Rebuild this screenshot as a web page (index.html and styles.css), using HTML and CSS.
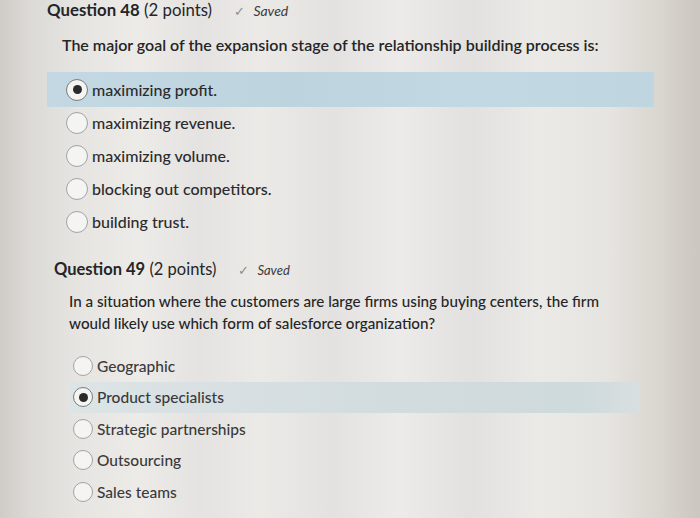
FILE: index.html
```html
<!DOCTYPE html>
<html>
<head>
<meta charset="utf-8">
<link rel="stylesheet" href="styles.css">
</head>
<body>
<div class="page">
  <section class="q q48">
    <div class="qhead">
      <span class="qtitle"><b>Question 48</b> (2 points)</span>
      <span class="saved"><span class="tick">✓</span> Saved</span>
    </div>
    <p class="prompt">The major goal of the expansion stage of the relationship building process is:</p>
    <ul class="opts">
      <li class="opt selected"><span class="radio on"></span><span class="label">maximizing profit.</span></li>
      <li class="opt"><span class="radio"></span><span class="label">maximizing revenue.</span></li>
      <li class="opt"><span class="radio"></span><span class="label">maximizing volume.</span></li>
      <li class="opt"><span class="radio"></span><span class="label">blocking out competitors.</span></li>
      <li class="opt"><span class="radio"></span><span class="label">building trust.</span></li>
    </ul>
  </section>
  <section class="q q49">
    <div class="qhead">
      <span class="qtitle"><b>Question 49</b> (2 points)</span>
      <span class="saved"><span class="tick">✓</span> Saved</span>
    </div>
    <p class="prompt">In a situation where the customers are large firms using buying centers, the firm would likely use which form of salesforce organization?</p>
    <ul class="opts">
      <li class="opt"><span class="radio"></span><span class="label">Geographic</span></li>
      <li class="opt selected"><span class="radio on"></span><span class="label">Product specialists</span></li>
      <li class="opt"><span class="radio"></span><span class="label">Strategic partnerships</span></li>
      <li class="opt"><span class="radio"></span><span class="label">Outsourcing</span></li>
      <li class="opt"><span class="radio"></span><span class="label">Sales teams</span></li>
    </ul>
  </section>
</div>
</body>
</html>
```
FILE: styles.css
```css
html, body {
  margin: 0;
  padding: 0;
}
body {
  width: 700px;
  height: 518px;
  overflow: hidden;
  font-family: Lato, "Open Sans", sans-serif;
  color: #2b2b2d;
  background:
    linear-gradient(to right,
      #cfccc8 0px, #dcdad6 30px, #e6e5e2 80px, #ecebe8 140px, #e4e3e1 200px,
      #ebeae7 260px, #e3e2e0 330px, #ecebe9 400px, #e2e1df 470px, #ebeae7 540px,
      #e6e4e0 610px, #d9d5cf 660px, #cbc6bf 700px);
}
.page {
  display: flex;
  flex-direction: column;
}
.q48 {
  padding: 0 0 0 47px;
}
.q49 {
  padding: 21px 0 0 54px;
}
.qhead {
  display: flex;
  align-items: baseline;
  gap: 22px;
  height: 20px;
  line-height: 20px;
}
.q48 .qhead {
  margin-top: 0;
}
.qtitle {
  font-size: 16.8px;
  color: #252527;
}
.q49 .qtitle {
  font-size: 16.5px;
}
.qtitle b {
  font-weight: 700;
}
.saved {
  font-size: 14px;
  font-style: italic;
  color: #3a3a3c;
}
.q49 .saved {
  font-size: 13px;
}
.tick {
  font-style: normal;
  color: #8c8c8c;
  font-size: 13px;
  margin-right: 5px;
}
.prompt {
  margin: 0;
  font-size: 16px;
  font-weight: 600;
  line-height: 22px;
  color: #252527;
}
.q48 .prompt {
  padding: 14px 0 0 15px;
}
.q49 .prompt {
  padding: 11px 0 0 15px;
  font-size: 15.2px;
  font-weight: 500;
  width: 548px;
}
.opts {
  list-style: none;
  margin: 0;
  padding: 0;
}
.q48 .opts {
  margin-top: 16px;
  width: 607px;
}
.q49 .opts {
  margin-top: 16px;
  margin-left: 16px;
  width: 570px;
}
.opt {
  display: flex;
  align-items: center;
  gap: 4px;
  font-size: 16px;
  font-weight: 500;
  color: #2b2b2d;
}
.q48 .opt {
  height: 33px;
  padding-left: 19px;
}
.q48 .opt.selected {
  height: 35px;
  margin-bottom: -1px;
}
.q49 .opt {
  height: 31.5px;
  padding-left: 3px;
  font-size: 15.5px;
  color: #3a3a3c;
}
.opt.selected {
  background: linear-gradient(to right, #c3d8e2, #bdd4df 40%, #c2d8e3 70%, #bfd5df);
}
.q49 .opt.selected {
  background: linear-gradient(to right, #dde4e6, #d3dcdf 50%, #cfdadc 90%, #d9dfe0);
}
.radio {
  width: 20px;
  height: 20px;
  border-radius: 50%;
  border: 1.5px solid #a3a3a3;
  background: #f4f4f2;
  box-sizing: border-box;
  display: flex;
  align-items: center;
  justify-content: center;
  flex: none;
}
.q48 .radio {
  width: 22px;
  height: 22px;
}
.radio.on {
  border-color: #7a7a7a;
}
.radio.on::after {
  content: "";
  width: 9px;
  height: 9px;
  border-radius: 50%;
  background: #2a2a2a;
}
```
